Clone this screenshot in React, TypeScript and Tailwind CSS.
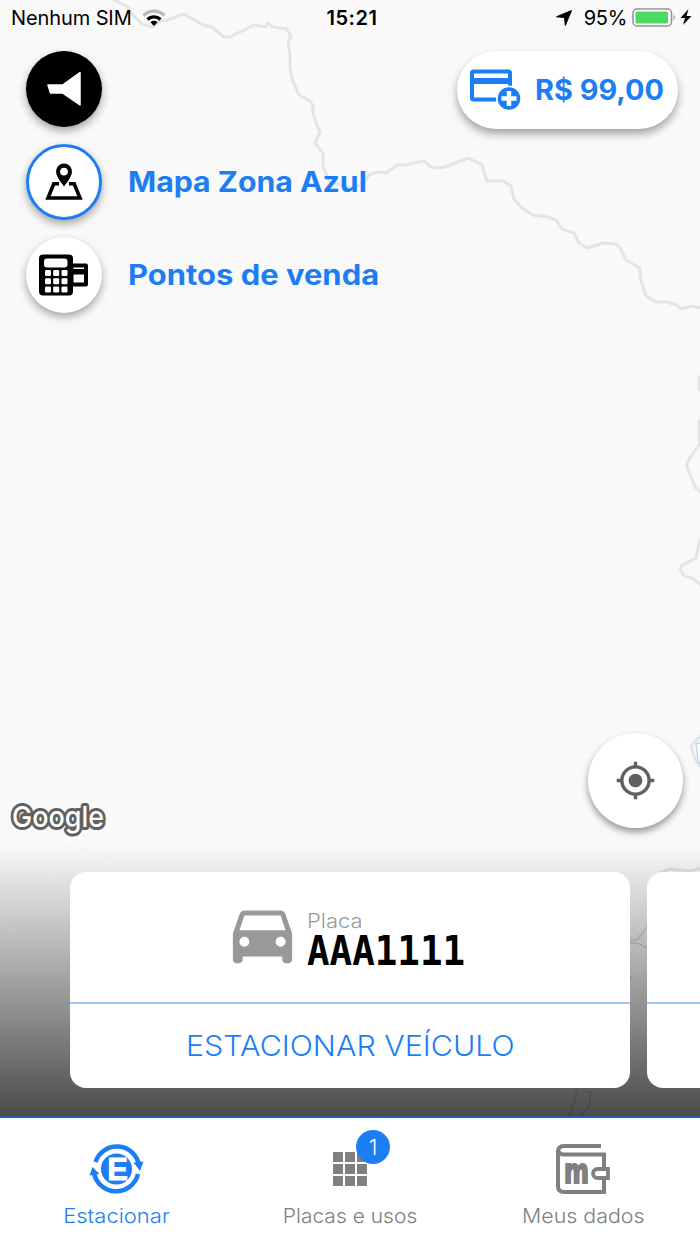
import { MdDirectionsCar, MdMyLocation } from "react-icons/md";
import type { ReactNode } from "react";

const MapBackground = () => (
  <svg
    className="absolute inset-0"
    width="700"
    height="1244"
    viewBox="0 0 700 1244"
    fill="none"
    strokeLinejoin="round"
  >
    <g stroke="#ffffff" strokeWidth="0.8">
      <path d="M0 212l15 13 14 20M0 295l8-2 12 12h24M107 297l20 4 18-1 23 8 32 1 24 5 50 2 12 12 30 0" />
      <path d="M552 24l20 19 5-5h10M574 136l-8 14 4 17 10 22 2 10-6 23M452 330l10-18 1-12M631 354l-16 16-10 12-15 12-12 9-17 6-19-3-7 6h-5" />
      <path d="M30 782l-3 14M0 832l12 15 28 5 17-4 20-12M35 830l22 20-4 10v16l-17 24M157 860l22-17 10-16 12 2 14 10v8l18 5M60 858l14-8 20 8 20 6 15 6M0 930l10-24 25-10M8 928l20 25 22 22 16 22" />
      <path d="M540 679l10 8 6 25 14 44 30-1M540 765l20-16 10-2M571 848l-4-5 4-6M560 870l3 5" />
    </g>
    <g stroke="#e4e4e4" strokeWidth="3">
      <path d="M110 -2L128 7L132 14L142 24L152 27L160 21L168 20L184 14L203 25L212 27L224 37L230 37L254 25L266 27L268 23L273 27L287 29L291 37L288 42L290 55L290 68L292 79L299 95L310 101L313 106L313 114L320 133L315 143L323 153L323 167L330 182L338 184L352 188L363 184L369 175L377 172L386 173L397 165L404 165L424 161L431 167L438 168L445 167L468 158L482 165L487 181L503 181L511 186L514 199L521 207L533 215L548 217L556 220L562 229L574 233L579 243L587 248L603 243L616 244L620 248L626 260L640 268L640 277L646 296L656 302L667 302L677 305L681 309L692 306L702 308" />
      <path d="M702 440L687 463L688 470L695 487L702 494M702 536L699 543L696 558L682 565L680 569L684 576L692 578L702 586M702 734L691 746L696 762L702 768" />
      <path d="M659 873L670 869L690 871L702 868M629 940H637L648 926M578 1086L571 1114L565 1117" />
      <path d="M700 378v10M700 422v18" strokeWidth="5" strokeLinecap="round" />
    </g>
    <g stroke="#a8d8f5" strokeWidth="1.2">
      <path d="M702 742l-6 2 2 18 4 2M630 943h7l11 5M585 1092h6l-2 14-8 10-4 1M629 975l2 3-2 4" />
    </g>
  </svg>
);

const MegaphoneIcon = () => (
  <svg width="76" height="76" viewBox="0 0 76 76" fill="#fff">
    <path
      d="M22 34H36.500L54 21.500V54L36.500 42H24.500Z"
      stroke="#fff"
      strokeWidth="1.500"
      strokeLinejoin="round"
    />
  </svg>
);

const MapPinIcon = () => (
  <svg width="38" height="38" viewBox="0 0 38 38">
    <path
      fillRule="evenodd"
      d="M19 .5a8 8 0 0 0-8 8c0 5.800 8 14.800 8 14.800s8-9 8-14.800a8 8 0 0 0-8-8Zm0 4.200a3.900 3.900 0 1 1 0 7.800 3.900 3.900 0 0 1 0-7.800Z"
    />
    <path
      d="M14 20.800H8.800L3 35H35L29.200 20.800H24"
      fill="none"
      stroke="#000"
      strokeWidth="3.600"
    />
  </svg>
);

const PosIcon = () => (
  <svg width="50" height="42" viewBox="0 0 50 42">
    <path d="M32 9.500h15q2 0 2 2v19q0 2-2 2H32z" />
    <path d="M34.500 13.500h10.500v1.500h-10.500zM34.500 20.500h10.500v8h-10.500z" fill="#fff" />
    <rect x="0" y="0.500" width="34" height="41" rx="4" />
    <g fill="#fff">
      <rect x="5" y="4.500" width="23.500" height="9" rx="3" />
      {[16, 24.3, 32.500].map((y) =>
        [6, 14.200, 22.500].map((x) => (
          <rect key={`${x}-${y}`} x={x} y={y} width="6" height="6" rx="1.200" />
        ))
      )}
    </g>
  </svg>
);

const AddCardIcon = () => (
  <svg width="52" height="42" viewBox="0 0 52 42">
    <rect x="2" y="2.500" width="38" height="28" rx="1.500" fill="none" stroke="#1d7ef3" strokeWidth="4" />
    <path d="M1 9h41v6H1z" fill="#1d7ef3" />
    <circle cx="39" cy="29.500" r="13" fill="#fff" />
    <circle cx="39" cy="29.500" r="11.300" fill="#1d7ef3" />
    <path d="M39 22v15M31.500 29.500h15" stroke="#fff" strokeWidth="4.500" />
  </svg>
);

const ParkIcon = () => (
  <svg width="56" height="52" viewBox="0 0 56 52">
    <circle cx="27.500" cy="26" r="15.500" fill="#1d7ef3" />
    <text
      x="28.500"
      y="37"
      textAnchor="middle"
      fontFamily="Liberation Sans, sans-serif"
      fontWeight="700"
      fontSize="31"
      fill="#fff"
      stroke="#fff"
      strokeWidth="0.800"
    >
      E
    </text>
    <path
      d="M6.500 19A22.500 22.500 0 0 1 50 22M49 31A22.500 22.500 0 0 1 5 30"
      fill="none"
      stroke="#1d7ef3"
      strokeWidth="4.500"
    />
    <path d="M44.500 19.500L54.500 18.500L51 28ZM0.500 32.500L3.500 24L10.500 31Z" fill="#1d7ef3" />
  </svg>
);

const GridIcon = () => (
  <svg width="34" height="34" viewBox="0 0 34 34" fill="#808080">
    {[0, 12, 24].map((y) =>
      [0, 12, 24].map((x) => (
        <rect key={`${x}-${y}`} x={x} y={y} width="10" height="10" />
      ))
    )}
  </svg>
);

const WalletIcon = () => (
  <svg width="56" height="52" viewBox="0 0 56 52" fill="none" stroke="#808080" strokeWidth="4">
    <path d="M46 3H9Q3 3 3 8.500V43Q3 49 9 49H49V36" />
    <path d="M3 7Q4 11.500 9 11.500H49V25" />
    <path d="M53 26H42.500a4.500 4.500 0 0 0 0 9H53Z" strokeWidth="3.800" />
    <text
      x="21.500"
      y="40"
      textAnchor="middle"
      fontFamily="DejaVu Sans, sans-serif"
      fontWeight="700"
      fontSize="33"
      fill="#808080"
      strokeWidth="2"
      textLength="25"
      lengthAdjust="spacingAndGlyphs"
    >
      m
    </text>
  </svg>
);

const StatusBar = () => (
  <div className="h-9 grid grid-cols-3 items-center pl-[11px] pr-[7px] text-[20px] text-black">
    <div className="flex items-center gap-[10px]">
      <span className="tracking-[-0.1px]">Nenhum SIM</span>
      <svg width="24" height="18" viewBox="0 0 24 18" fill="none" strokeWidth="3.200">
        <path d="M1.500 6.500a15 15 0 0 1 21 0" stroke="#b9b9b9" />
        <path d="M5.500 10.500a9.300 9.300 0 0 1 13 0" stroke="#000" />
        <path d="M12 17l-3.600-3.700a5.200 5.200 0 0 1 7.200 0z" fill="#000" />
      </svg>
    </div>
    <span className="text-center font-semibold tracking-[0.5px]">15:21</span>
    <div className="flex items-center justify-end">
      <svg className="mr-3" width="16" height="16" viewBox="0 0 16 16">
        <path d="M15.500.5L9.300 15.500 8.500 7.500.5 6.800z" stroke="#000" strokeLinejoin="round" />
      </svg>
      <span className="mr-[5px] tracking-[-0.3px]">95%</span>
      <svg width="61" height="20" viewBox="0 0 61 20">
        <rect x="1" y="1" width="38.500" height="17" rx="4" fill="#fff" stroke="#929292" strokeWidth="1.500" />
        <rect x="3.500" y="3.500" width="32.500" height="12" rx="1.500" fill="#4cd964" />
        <path d="M41.500 6.500q2.500 3 0 6z" fill="#929292" />
        <path d="M56.500 1l-8 9h4.500l-2 7 8.500-9h-5z" />
      </svg>
    </div>
  </div>
);

const Shortcut = ({
  className,
  label,
  children,
}: {
  className: string;
  label?: ReactNode;
  children: ReactNode;
}) => (
  <div className="flex items-center gap-[26px]">
    <button
      className={`size-[76px] rounded-full flex items-center justify-center shadow-[0_4px_8px_rgba(0,0,0,0.35)] ${className}`}
    >
      {children}
    </button>
    {label}
  </div>
);

const NavItem = ({
  icon,
  label,
  className,
}: {
  icon: ReactNode;
  label: string;
  className: string;
}) => (
  <button className="flex flex-col items-center pt-[25px]">
    <div className="h-[52px] flex items-center justify-center">{icon}</div>
    <span className={`mt-[7px] text-[20px] leading-7 font-light whitespace-nowrap ${className}`}>
      {label}
    </span>
  </button>
);

export default function App() {
  return (
    <div className="relative w-[700px] h-[1244px] overflow-hidden bg-[#f9f9f9] font-['Inter',sans-serif]">
      <MapBackground />
      <div className="relative h-full flex flex-col">
        <StatusBar />

        <div className="flex justify-between items-start pt-[15px] pl-[26px] pr-[22px]">
          <div className="flex flex-col gap-[17px] text-[28px] font-bold text-[#1d7ef3]">
            <Shortcut className="bg-black">
              <MegaphoneIcon />
            </Shortcut>
            <Shortcut
              className="bg-white border-[3px] border-[#1d7ef3]"
              label={<span className="origin-left scale-x-[1.08]">Mapa Zona Azul</span>}
            >
              <MapPinIcon />
            </Shortcut>
            <Shortcut
              className="bg-white"
              label={<span className="origin-left scale-x-[1.105]">Pontos de venda</span>}
            >
              <PosIcon />
            </Shortcut>
          </div>
          <button className="h-[78px] w-[221px] pl-[13px] flex items-center gap-[13px] rounded-full bg-white shadow-[0_5px_9px_rgba(0,0,0,0.35)]">
            <AddCardIcon />
            <span className="origin-left scale-x-[1.03] text-[28px] font-bold text-[#1d7ef3] whitespace-nowrap">
              R$ 99,00
            </span>
          </button>
        </div>

        <div className="flex-1 flex justify-between items-end pl-2 pr-[17px] pb-[16px]">
          <svg className="-mb-[9px] overflow-visible" width="102" height="46" viewBox="0 0 102 46">
            <text
              x="4"
              y="36"
              fontFamily="Inter, sans-serif"
              fontWeight="500"
              fontSize="29"
              textLength="92"
              lengthAdjust="spacingAndGlyphs"
              fill="#fff"
              stroke="#606060"
              strokeWidth="6"
              strokeLinejoin="round"
              paintOrder="stroke"
            >
              Google
            </text>
          </svg>
          <button className="size-[95px] rounded-full bg-white flex items-center justify-center text-[#606060] shadow-[0_4px_7px_rgba(0,0,0,0.4)]">
            <MdMyLocation size={41} />
          </button>
        </div>

        <div className="h-[272px] pt-7 flex gap-[17px] pl-[70px] bg-linear-to-b from-transparent to-black/70">
          <div className="w-[560px] h-[216px] shrink-0 rounded-2xl bg-white overflow-hidden">
            <div className="h-[132px] border-b-2 border-[#9ac6fb] flex pl-[153px]">
              <MdDirectionsCar className="mt-[22px] text-[#999]" size={79} />
              <div className="pt-[37px] pl-[5px]">
                <div className="origin-left scale-x-[1.1] text-[20px] leading-6 font-light text-[#999]">
                  Placa
                </div>
                <div className="origin-left scale-x-[0.915] text-[41px] leading-9 font-bold text-black font-['DejaVu_Sans_Mono',monospace]">
                  AAA1111
                </div>
              </div>
            </div>
            <div className="h-[84px] flex items-center justify-center text-[28px] font-light text-[#1d7ef3]">
              <span className="scale-x-[1.086]">ESTACIONAR VEÍCULO</span>
            </div>
          </div>
          <div className="w-[560px] h-[216px] shrink-0 rounded-2xl bg-white overflow-hidden">
            <div className="h-[132px] border-b-2 border-[#9ac6fb]" />
          </div>
        </div>

        <nav className="h-[128px] shrink-0 grid grid-cols-3 bg-white border-t-2 border-[#1c5fae]">
          <NavItem icon={<ParkIcon />} label="Estacionar" className="text-[#1d7ef3] scale-x-[1.1]" />
          <NavItem
            icon={
              <div className="relative">
                <GridIcon />
                <span className="absolute -top-[22px] left-[23px] size-[34px] rounded-full bg-[#1d7ef3] text-white text-[22px] font-light flex items-center justify-center">
                  1
                </span>
              </div>
            }
            label="Placas e usos"
            className="text-[#808080] scale-x-[1.05]"
          />
          <NavItem icon={<WalletIcon />} label="Meus dados" className="text-[#808080] scale-x-[1.07]" />
        </nav>
      </div>
    </div>
  );
}
